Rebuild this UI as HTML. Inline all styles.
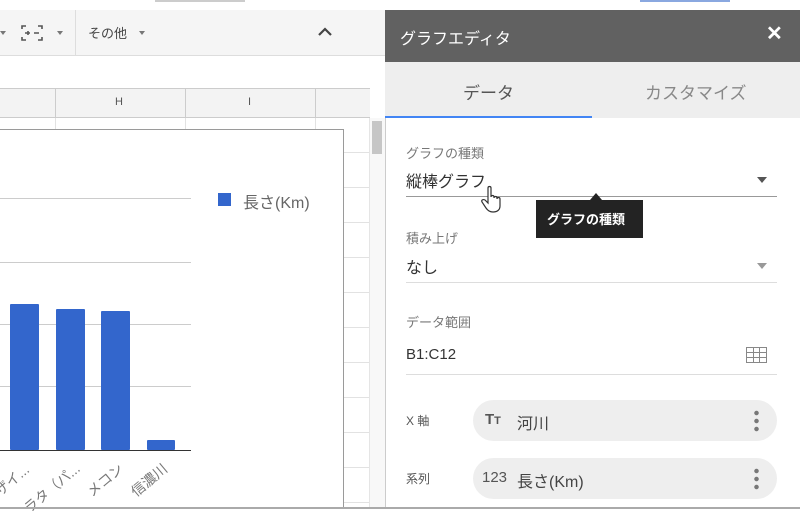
<!DOCTYPE html>
<html><head><meta charset="utf-8"><style>
*{margin:0;padding:0;box-sizing:border-box}
body{width:800px;height:509px;overflow:hidden;background:#fff;font-family:"Liberation Sans","Noto Sans CJK JP",sans-serif;position:relative}
.a{position:absolute}
</style></head><body>
<div class="a" style="left:0;top:0;width:800px;height:10px;background:#fff"></div>
<div class="a" style="left:155px;top:0;width:90px;height:2px;background:#ccc"></div>
<div class="a" style="left:640px;top:0;width:90px;height:2px;background:#8aa8e0"></div>
<div class="a" style="left:0;top:10px;width:385px;height:46px;background:#f5f5f5;border-bottom:1px solid #ddd"></div>
<div class="a" style="left:75px;top:10px;width:1px;height:46px;background:#ddd"></div>
<svg class="a" style="left:20px;top:24px" width="24" height="18"><g fill="none" stroke="#555" stroke-width="1.6"><path d="M2 5V2h4M18 2h4v3M2 13v3h4M18 16h4v-3"/><path d="M5 9h5M8 7v4M14 9h5"/></g></svg>
<div class="a" style="left:57px;top:31px;border:3.5px solid transparent;border-top:4px solid #777"></div>
<div class="a" style="left:0;top:31px;border:3.5px solid transparent;border-top:4px solid #777"></div>
<div class="a" style="left:88px;top:23px;font-size:13px;color:#444">その他</div>
<div class="a" style="left:139px;top:31px;border:3.5px solid transparent;border-top:4px solid #777"></div>
<svg class="a" style="left:317px;top:26px" width="16" height="12"><path d="M2 9l6-6 6 6" fill="none" stroke="#444" stroke-width="2.2"/></svg>
<div class="a" style="left:0;top:88px;width:370px;height:30px;background:#f3f3f3;border-top:1px solid #ccc;border-bottom:1px solid #ccc"></div>
<div class="a" style="left:55px;top:88px;width:1px;height:30px;background:#ccc"></div>
<div class="a" style="left:185px;top:88px;width:1px;height:30px;background:#ccc"></div>
<div class="a" style="left:315px;top:88px;width:1px;height:30px;background:#ccc"></div>
<div class="a" style="left:115px;top:96px;font-size:11px;color:#555">H</div>
<div class="a" style="left:248px;top:96px;font-size:11px;color:#555">I</div>
<div class="a" style="left:0;top:118px;width:370px;height:391px;background:repeating-linear-gradient(to bottom,#fff 0,#fff 34px,#e2e2e2 34px,#e2e2e2 35px)"></div>
<div class="a" style="left:55px;top:118px;width:1px;height:391px;background:#e2e2e2"></div>
<div class="a" style="left:185px;top:118px;width:1px;height:391px;background:#e2e2e2"></div>
<div class="a" style="left:315px;top:118px;width:1px;height:391px;background:#e2e2e2"></div>
<div class="a" style="left:369px;top:118px;width:16px;height:391px;background:#f8f8f8;border-left:1px solid #e5e5e5"></div>
<div class="a" style="left:372px;top:121px;width:10px;height:33px;background:#c6c6c6"></div>
<div class="a" style="left:0;top:129px;width:344px;height:380px;background:#fff;border:1px solid #9a9a9a;border-left:none"></div>
<div class="a" style="left:0;top:198px;width:191px;height:1px;background:#ccc"></div>
<div class="a" style="left:0;top:262px;width:191px;height:1px;background:#ccc"></div>
<div class="a" style="left:0;top:324px;width:191px;height:1px;background:#ccc"></div>
<div class="a" style="left:0;top:386px;width:191px;height:1px;background:#ccc"></div>
<div class="a" style="left:10px;top:304px;width:29px;height:146px;background:#3366cc;border-radius:1px"></div>
<div class="a" style="left:56px;top:309px;width:29px;height:141px;background:#3366cc;border-radius:1px"></div>
<div class="a" style="left:101px;top:311px;width:29px;height:139px;background:#3366cc;border-radius:1px"></div>
<div class="a" style="left:147px;top:440px;width:28px;height:10px;background:#3366cc;border-radius:1px"></div>
<div class="a" style="left:0;top:450px;width:191px;height:1px;background:#333"></div>
<div class="a" style="left:-8px;top:470px;font-size:14px;color:#777;transform:rotate(-40deg);white-space:nowrap">ザイ...</div>
<div class="a" style="left:18px;top:478px;font-size:14px;color:#777;transform:rotate(-40deg);white-space:nowrap">ラタ（パ...</div>
<div class="a" style="left:84px;top:470px;font-size:14px;color:#777;transform:rotate(-40deg);white-space:nowrap">メコン</div>
<div class="a" style="left:128px;top:470px;font-size:14px;color:#777;transform:rotate(-40deg);white-space:nowrap">信濃川</div>
<div class="a" style="left:218px;top:193px;width:13px;height:13px;background:#3366cc"></div>
<div class="a" style="left:243px;top:189px;font-size:16px;color:#666">長さ(Km)</div>
<div class="a" style="left:385px;top:10px;width:415px;height:499px;background:#fff;border-left:1px solid #ccc"></div>
<div class="a" style="left:385px;top:10px;width:415px;height:52px;background:#616161"></div>
<div class="a" style="left:400px;top:25px;font-size:16px;color:#fff">グラフエディタ</div>
<div class="a" style="left:766px;top:21px;font-size:20px;color:#fff;font-weight:bold">✕</div>
<div class="a" style="left:385px;top:62px;width:415px;height:56px;background:#eee"></div>
<div class="a" style="left:385px;top:116px;width:207px;height:2px;background:#4285f4"></div>
<div class="a" style="left:463px;top:79px;font-size:17px;color:#555">データ</div>
<div class="a" style="left:645px;top:79px;font-size:17px;color:#888">カスタマイズ</div>
<div class="a" style="left:406px;top:143px;font-size:13px;color:#777">グラフの種類</div>
<div class="a" style="left:406px;top:168px;font-size:16px;color:#333">縦棒グラフ</div>
<div class="a" style="left:757px;top:177px;border:5px solid transparent;border-top:6px solid #555"></div>
<div class="a" style="left:406px;top:196px;width:371px;height:1px;background:#999"></div>
<div class="a" style="left:536px;top:200px;width:107px;height:38px;background:#232323"></div>
<div class="a" style="left:590px;top:193px;border:6px solid transparent;border-bottom:7px solid #232323;border-top:none"></div>
<div class="a" style="left:547px;top:209px;font-size:13px;color:#fff;font-weight:bold">グラフの種類</div>
<svg class="a" style="left:480px;top:185px" width="26" height="30"><path d="M8 3c0-2 3-2 3 0v9c0-2 3-2 3 0v1c0-2 3-2 3 0v1c0-2 3-2 3 0v7c0 4-3 6-7 6-3 0-5-1-7-4l-4-6c-1-2 1-3 3-2l3 3z" fill="#fff" stroke="#333" stroke-width="1.2"/></svg>
<div class="a" style="left:406px;top:228px;font-size:13px;color:#777">積み上げ</div>
<div class="a" style="left:406px;top:254px;font-size:16px;color:#333">なし</div>
<div class="a" style="left:757px;top:263px;border:5px solid transparent;border-top:6px solid #999"></div>
<div class="a" style="left:406px;top:282px;width:371px;height:1px;background:#ddd"></div>
<div class="a" style="left:406px;top:312px;font-size:13px;color:#777">データ範囲</div>
<div class="a" style="left:406px;top:346px;font-size:15px;color:#333">B1:C12</div>
<svg class="a" style="left:746px;top:347px" width="21" height="16"><g fill="none" stroke="#888" stroke-width="1"><rect x="0.5" y="0.5" width="20" height="15"/><path d="M7.5 0v16M13.5 0v16M0 5.5h21M0 10.5h21"/></g></svg>
<div class="a" style="left:406px;top:374px;width:371px;height:1px;background:#ddd"></div>
<div class="a" style="left:406px;top:412px;font-size:12px;color:#555">X 軸</div>
<div class="a" style="left:473px;top:400px;width:304px;height:41px;background:#eee;border-radius:21px"></div>
<div class="a" style="left:485px;top:411px;font-size:15px;color:#555;font-weight:bold">T<span style="font-size:11px">T</span></div>
<div class="a" style="left:517px;top:410px;font-size:16px;color:#444">河川</div>
<div class="a" style="left:754px;top:409px;width:5px;height:24px;background:radial-gradient(circle,#777 2px,transparent 2.5px) 0 0/5px 8px"></div>
<div class="a" style="left:406px;top:470px;font-size:12px;color:#555">系列</div>
<div class="a" style="left:473px;top:458px;width:304px;height:41px;background:#eee;border-radius:21px"></div>
<div class="a" style="left:482px;top:469px;font-size:15px;color:#555">123</div>
<div class="a" style="left:517px;top:468px;font-size:16px;color:#444">長さ(Km)</div>
<div class="a" style="left:754px;top:467px;width:5px;height:24px;background:radial-gradient(circle,#777 2px,transparent 2.5px) 0 0/5px 8px"></div>
<div class="a" style="left:0;top:507px;width:800px;height:2px;background:#aaa"></div>
</body></html>
